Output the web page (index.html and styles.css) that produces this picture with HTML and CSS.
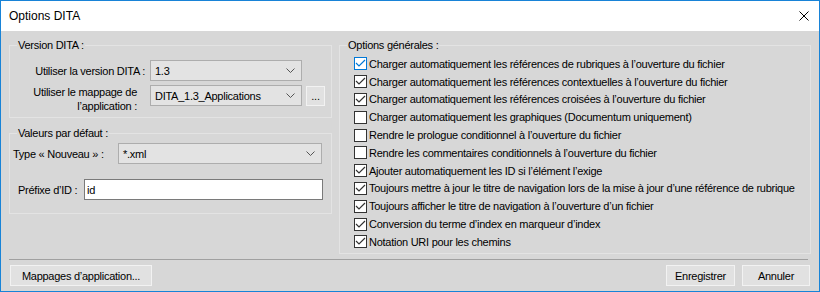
FILE: index.html
```html
<!DOCTYPE html>
<html lang="fr">
<head>
    <meta charset="UTF-8">
    <title>Options DITA</title>
    <link rel="stylesheet" href="styles.css">
</head>
<body>

    <div class="dialog">
        <!-- Title bar -->
        <header class="titlebar">
            <span class="title">Options DITA</span>
            <svg class="close-btn" width="10" height="10" viewBox="0 0 10 10">
                <path d="M0.5 0.5 L9.5 9.5 M9.5 0.5 L0.5 9.5" stroke="#000" stroke-width="1" fill="none"/>
            </svg>
        </header>

        <div class="dialog-body">
            <div class="columns">
                <div class="left-col">
                    <!-- Version DITA -->
                    <fieldset class="group group-version">
                        <legend>Version DITA :</legend>
                        <div class="group-inner">
                            <div class="form-row">
                                <label class="lbl lbl-version">Utiliser la version DITA :</label>
                                <div class="combo combo-version">
                                    <span>1.3</span>
                                    <svg class="chevron" width="9" height="5" viewBox="0 0 9 5"><polyline points="0.5,0.5 4.5,4.5 8.5,0.5" fill="none" stroke="#555" stroke-width="1"/></svg>
                                </div>
                            </div>
                            <div class="form-row form-row-map">
                                <label class="lbl lbl-map">Utiliser le mappage de<br>l’application :</label>
                                <div class="combo combo-version">
                                    <span>DITA_1.3_Applications</span>
                                    <svg class="chevron" width="9" height="5" viewBox="0 0 9 5"><polyline points="0.5,0.5 4.5,4.5 8.5,0.5" fill="none" stroke="#555" stroke-width="1"/></svg>
                                </div>
                                <button class="btn btn-dots">...</button>
                            </div>
                        </div>
                    </fieldset>

                    <!-- Valeurs par defaut -->
                    <fieldset class="group group-defaults">
                        <legend>Valeurs par défaut :</legend>
                        <div class="group-inner defaults-inner">
                            <div class="form-row">
                                <label class="lbl lbl-type">Type « Nouveau » :</label>
                                <div class="combo combo-type">
                                    <span>*.xml</span>
                                    <svg class="chevron" width="9" height="5" viewBox="0 0 9 5"><polyline points="0.5,0.5 4.5,4.5 8.5,0.5" fill="none" stroke="#555" stroke-width="1"/></svg>
                                </div>
                            </div>
                            <div class="form-row form-row-prefix">
                                <label class="lbl lbl-prefix">Préfixe d’ID :</label>
                                <input class="text-input" type="text" value="id">
                            </div>
                        </div>
                    </fieldset>
                </div>

                <!-- Options generales -->
                <fieldset class="group group-options">
                    <legend>Options générales :</legend>
                    <ul class="checks">
                        <li><span class="box focus"><svg width="11" height="11" viewBox="0 0 11 11"><polyline points="1,5 4,8 10,2" fill="none" stroke="#0078d7" stroke-width="1.2"/></svg></span>Charger automatiquement les références de rubriques à l’ouverture du fichier</li>
                        <li><span class="box"><svg width="11" height="11" viewBox="0 0 11 11"><polyline points="1,5 4,8 10,2" fill="none" stroke="#333" stroke-width="1.2"/></svg></span>Charger automatiquement les références contextuelles à l’ouverture du fichier</li>
                        <li><span class="box"><svg width="11" height="11" viewBox="0 0 11 11"><polyline points="1,5 4,8 10,2" fill="none" stroke="#333" stroke-width="1.2"/></svg></span>Charger automatiquement les références croisées à l’ouverture du fichier</li>
                        <li><span class="box"></span>Charger automatiquement les graphiques (Documentum uniquement)</li>
                        <li><span class="box"></span>Rendre le prologue conditionnel à l’ouverture du fichier</li>
                        <li><span class="box"></span>Rendre les commentaires conditionnels à l’ouverture du fichier</li>
                        <li><span class="box"><svg width="11" height="11" viewBox="0 0 11 11"><polyline points="1,5 4,8 10,2" fill="none" stroke="#333" stroke-width="1.2"/></svg></span>Ajouter automatiquement les ID si l’élément l’exige</li>
                        <li><span class="box"><svg width="11" height="11" viewBox="0 0 11 11"><polyline points="1,5 4,8 10,2" fill="none" stroke="#333" stroke-width="1.2"/></svg></span>Toujours mettre à jour le titre de navigation lors de la mise à jour d’une référence de rubrique</li>
                        <li><span class="box"><svg width="11" height="11" viewBox="0 0 11 11"><polyline points="1,5 4,8 10,2" fill="none" stroke="#333" stroke-width="1.2"/></svg></span>Toujours afficher le titre de navigation à l’ouverture d’un fichier</li>
                        <li><span class="box"><svg width="11" height="11" viewBox="0 0 11 11"><polyline points="1,5 4,8 10,2" fill="none" stroke="#333" stroke-width="1.2"/></svg></span>Conversion du terme d’index en marqueur d’index</li>
                        <li><span class="box"><svg width="11" height="11" viewBox="0 0 11 11"><polyline points="1,5 4,8 10,2" fill="none" stroke="#333" stroke-width="1.2"/></svg></span>Notation URI pour les chemins</li>
                    </ul>
                </fieldset>
            </div>

            <!-- Footer buttons -->
            <footer class="footer">
                <button class="btn btn-mappings">Mappages d’application...</button>
                <div class="actions">
                    <button class="btn btn-save">Enregistrer</button>
                    <button class="btn btn-cancel">Annuler</button>
                </div>
            </footer>
        </div>
    </div>

</body>
</html>
```

FILE: styles.css
```css
/* Reset default styling */
* {
    margin: 0;
    padding: 0;
    box-sizing: border-box;
}

body {
    background: #fff;
    font-family: "Liberation Sans", Arial, sans-serif;
    font-size: 11px;
    letter-spacing: -0.26px;
    color: #000;
    white-space: nowrap;
}

/* Dialog window */
.dialog {
    width: 820px;
    height: 292px;
    border: 1px solid #1883d7;
    display: flex;
    flex-direction: column;
    background: #d7d7d7;
}

.titlebar {
    height: 30px;
    background: #fff;
    display: flex;
    align-items: center;
    justify-content: space-between;
    padding: 0 10px 0 8px;
}

.title {
    font-size: 12px;
    letter-spacing: 0;
}

.close-btn {
    display: block;
}

.dialog-body {
    flex: 1;
    display: flex;
    flex-direction: column;
    padding: 8px 8px 5px 8px;
}

.columns {
    display: flex;
    gap: 7px;
    height: 215px;
}

.left-col {
    width: 323px;
    flex-shrink: 0;
    display: flex;
    flex-direction: column;
    gap: 9px;
}

/* Group boxes */
.group {
    border: 1px solid #e3e3e3;
    padding: 0;
    min-width: 0;
}

.group legend {
    margin-left: 7px;
    padding: 0 1px;
    line-height: 13px;
}

.group-inner {
    padding: 8px 5px 4px 0;
}

.form-row {
    display: flex;
    align-items: center;
}

.form-row > * {
    flex-shrink: 0;
}

.form-row-map {
    align-items: flex-start;
    margin-top: 4px;
}

.lbl {
    text-align: right;
    padding-right: 5px;
}

.lbl-version {
    width: 140px;
}

.lbl-map {
    width: 140px;
    padding-right: 13px;
    line-height: 14px;
}

/* Combo boxes */
.combo {
    height: 21px;
    background: #e3e3e3;
    border: 1px solid #adadad;
    display: flex;
    align-items: center;
    justify-content: space-between;
    padding: 0 6px 0 4px;
}

.combo-version {
    width: 152px;
}

.chevron {
    display: block;
}

.defaults-inner {
    padding: 3px 8px 13px 3px;
}

.lbl-type {
    width: 105px;
    text-align: left;
}

.combo-type {
    width: 204px;
}

.form-row-prefix {
    margin-top: 15px;
}

.lbl-prefix {
    text-align: left;
    padding-left: 5px;
    width: 71px;
}

.text-input {
    width: 239px;
    height: 21px;
    border: 1px solid #7a7a7a;
    background: #fff;
    font-family: inherit;
    font-size: 11px;
    letter-spacing: inherit;
    padding: 0 2px;
    outline: none;
}

/* Buttons */
.btn {
    height: 21px;
    background: #e1e1e1;
    border: 1px solid #f2f2f2;
    font-family: inherit;
    font-size: 11px;
    letter-spacing: inherit;
    color: #000;
}

.btn-dots {
    width: 19px;
    height: 20px;
    margin-left: 4px;
    margin-top: 1px;
    line-height: 14px;
}

/* Options checkboxes */
.group-options {
    flex: 1;
}

.checks {
    list-style: none;
    padding: 3px 0 0 14px;
}

.checks li {
    height: 17.8px;
    display: flex;
    align-items: center;
}

.box {
    width: 13px;
    height: 13px;
    flex-shrink: 0;
    border: 1px solid #333;
    background: #fff;
    margin-right: 2px;
    display: flex;
    align-items: center;
    justify-content: center;
}

.box svg {
    display: block;
}

.box.focus {
    border-color: #0078d7;
}

/* Footer */
.footer {
    margin-top: 5px;
    border-top: 1px solid #a0a0a0;
    margin-right: 3px;
    padding-top: 5px;
    display: flex;
    justify-content: space-between;
    align-items: center;
}

.btn-mappings {
    width: 142px;
    margin-left: 1px;
}

.actions {
    display: flex;
    gap: 7px;
    margin-right: -2px;
}

.btn-save {
    width: 69px;
}

.btn-cancel {
    width: 68px;
}
```
